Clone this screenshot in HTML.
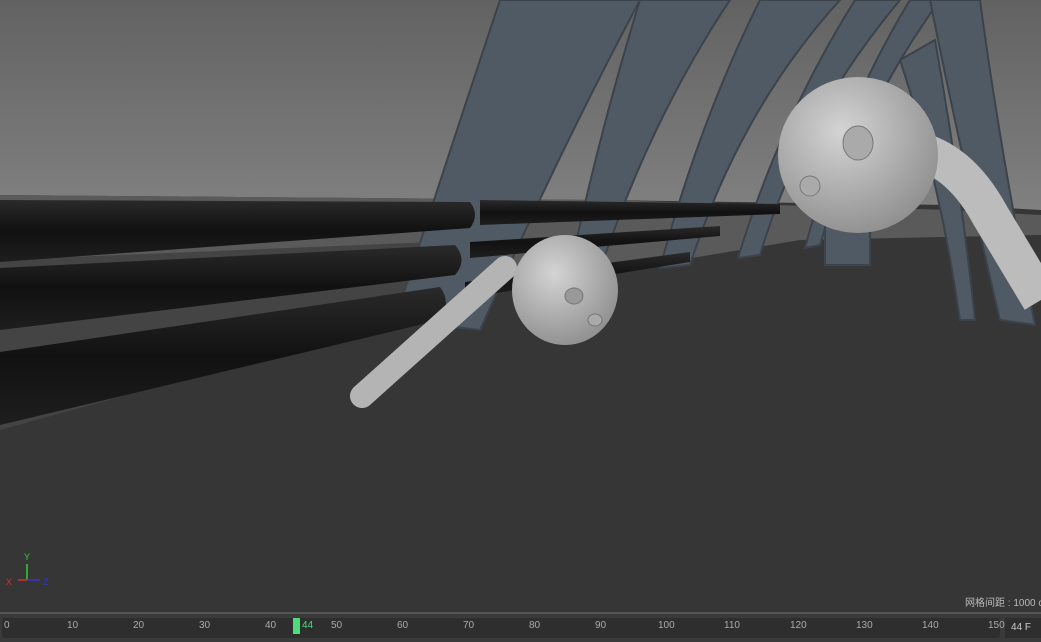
<!DOCTYPE html>
<html><head><meta charset="utf-8"><style>
html,body{margin:0;padding:0;width:1041px;height:640px;overflow:hidden;background:#353535;font-family:"Liberation Sans","Noto Sans CJK SC",sans-serif}
svg{position:absolute;left:0;top:0}
.tl{position:absolute;left:0;top:612px;width:1041px;height:28px;background:#3a3a3a;border-top:2px solid #555}
.lab{position:absolute;top:6px;font-size:10px;color:#aaa}
</style></head><body>
<svg width="1041" height="640" viewBox="0 0 1041 640">
<defs>
<linearGradient id="sky" x1="0" y1="0" x2="0" y2="1"><stop offset="0" stop-color="#626262"/><stop offset="1" stop-color="#808080"/></linearGradient>
<radialGradient id="bud" cx="0.4" cy="0.35" r="0.7"><stop offset="0" stop-color="#d4d4d4"/><stop offset="1" stop-color="#8e8e8e"/></radialGradient>
<linearGradient id="pipe" x1="0" y1="0" x2="0" y2="1"><stop offset="0" stop-color="#2a2a2a"/><stop offset="0.5" stop-color="#111"/><stop offset="1" stop-color="#1e1e1e"/></linearGradient>
</defs>
<rect width="1041" height="612" fill="#363636"/>
<polygon points="0,0 1041,0 1041,210 950,205 600,200 0,195" fill="url(#sky)"/>
<polygon points="0,195 600,200 950,210 1041,215 1041,235 800,240 500,290 0,300" fill="#5a5a5a"/>
<polygon points="0,260 480,240 470,300 0,430" fill="#444"/>
<g fill="#505a64" stroke="#3c434b" stroke-width="2">
<path d="M500,0 L640,0 Q560,150 480,330 L395,320 Q450,150 500,0Z"/>
<path d="M640,0 L730,0 Q650,120 600,270 L570,270 Q600,130 640,0Z"/>
<path d="M760,0 L840,0 Q740,110 690,265 L660,268 Q700,120 760,0Z"/>
<path d="M855,0 L900,0 Q800,120 760,255 L738,258 Q780,120 855,0Z"/>
<path d="M910,0 L940,0 Q860,110 820,245 L805,248 Q840,115 910,0Z"/>
<path d="M930,0 L980,0 Q1000,150 1035,325 L1000,320 Q960,150 930,0Z"/>
<path d="M900,60 L935,40 Q960,180 975,320 L960,320 Q940,180 900,60Z"/>
<rect x="825" y="225" width="45" height="40"/>
</g>
<g fill="url(#pipe)">
<path d="M0,200 L470,202 Q480,215 470,228 L0,262Z"/>
<path d="M0,268 L455,245 Q468,260 455,275 L0,330Z"/>
<path d="M0,352 L440,287 Q452,303 440,320 L0,425Z"/>
<path d="M480,200 L780,204 L780,214 L480,225Z"/>
<path d="M470,242 L720,226 L720,236 L470,258Z"/>
<path d="M465,282 L690,252 L690,262 L465,298Z"/>
</g>
<path d="M362,396 L505,268" stroke="#b4b4b4" stroke-width="24" stroke-linecap="round" fill="none"/>
<ellipse cx="565" cy="290" rx="53" ry="55" fill="url(#bud)"/>
<ellipse cx="574" cy="296" rx="9" ry="8" fill="#999" stroke="#777"/>
<ellipse cx="595" cy="320" rx="7" ry="6" fill="#aaa" stroke="#777"/>
<path d="M915,150 Q960,160 990,215 L1041,300" stroke="#bcbcbc" stroke-width="38" fill="none"/>
<ellipse cx="858" cy="155" rx="80" ry="78" fill="url(#bud)"/>
<ellipse cx="858" cy="143" rx="15" ry="17" fill="#aaa" stroke="#777"/>
<ellipse cx="810" cy="186" rx="10" ry="10" fill="#aaa" stroke="#777"/>
<line x1="27" y1="580" x2="27" y2="564" stroke="#3c3" stroke-width="1.5"/>
<line x1="18" y1="580" x2="27" y2="580" stroke="#c33" stroke-width="1.5"/>
<line x1="27" y1="580" x2="40" y2="580" stroke="#33c" stroke-width="1.5"/>
<text x="24" y="560" font-size="9" fill="#3c3" font-family="Liberation Sans">Y</text>
<text x="6" y="585" font-size="9" fill="#c33" font-family="Liberation Sans">X</text>
<text x="43" y="585" font-size="9" fill="#33c" font-family="Liberation Sans">Z</text>
<text x="965" y="606" font-size="10" fill="#bbb" font-family="Liberation Sans,Noto Sans CJK SC,sans-serif">网格间距 : 1000 c</text>
</svg>
<div class="tl">
<div style="position:absolute;left:2px;top:4px;width:998px;height:20px;background:#2e2e2e;border-radius:3px"></div>
<div style="position:absolute;left:1005px;top:4px;width:36px;height:20px;background:#2e2e2e;font-size:10px;color:#ccc;line-height:20px;padding-left:6px">44 F</div>
<div style="position:absolute;left:293px;top:4px;width:7px;height:16px;background:#4cdc7c"></div>
<span class="lab" style="left:4px">0</span><span class="lab" style="left:67px">10</span><span class="lab" style="left:133px">20</span><span class="lab" style="left:199px">30</span><span class="lab" style="left:265px">40</span><span class="lab" style="left:302px;color:#4cdc7c">44</span><span class="lab" style="left:331px">50</span><span class="lab" style="left:397px">60</span><span class="lab" style="left:463px">70</span><span class="lab" style="left:529px">80</span><span class="lab" style="left:595px">90</span><span class="lab" style="left:658px">100</span><span class="lab" style="left:724px">110</span><span class="lab" style="left:790px">120</span><span class="lab" style="left:856px">130</span><span class="lab" style="left:922px">140</span><span class="lab" style="left:988px">150</span>
</div>
</body></html>
